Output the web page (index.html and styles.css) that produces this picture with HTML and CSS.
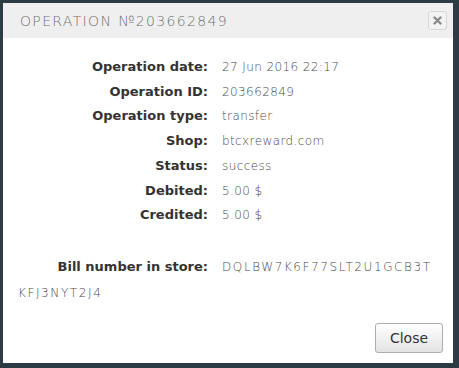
FILE: index.html
```html
<!DOCTYPE html>
<html>
<head>
<meta charset="utf-8">
<link rel="stylesheet" href="styles.css">
</head>
<body>
<div class="dialog">
  <div class="header">
    <div class="title">OPERATION №203662849</div>
    <button class="x-btn" aria-label="close">
      <svg width="9" height="9" viewBox="0 0 9 9"><path d="M1.5 1.5 L7.5 7.5 M7.5 1.5 L1.5 7.5" stroke="#8a8a8a" stroke-width="2.4" stroke-linecap="round"/></svg>
    </button>
  </div>
  <div class="body">
    <div class="row"><span class="label">Operation date:</span><span class="value">27 Jun 2016 22:17</span></div>
    <div class="row"><span class="label">Operation ID:</span><span class="value">203662849</span></div>
    <div class="row"><span class="label">Operation type:</span><span class="value">transfer</span></div>
    <div class="row"><span class="label">Shop:</span><span class="value">btcxreward.com</span></div>
    <div class="row"><span class="label">Status:</span><span class="value">success</span></div>
    <div class="row"><span class="label">Debited:</span><span class="value">5.00 $</span></div>
    <div class="row"><span class="label">Credited:</span><span class="value">5.00 $</span></div>
    <div class="row bill"><span class="label">Bill number in store:</span><span class="value">DQLBW7K6F77SLT2U1GCB3T<wbr>KFJ3NYT2J4</span></div>
  </div>
  <div class="footer">
    <button class="close-btn">Close</button>
  </div>
</div>
</body>
</html>
```
FILE: styles.css
```css
html, body {
  margin: 0;
  padding: 0;
  background: #2c3b44;
  width: 459px;
  height: 368px;
  overflow: hidden;
}
body {
  padding: 3px;
  box-sizing: border-box;
}
.dialog {
  width: 450px;
  height: 360px;
  background: #fff;
  display: flex;
  flex-direction: column;
}
.header {
  height: 35px;
  background: #efefef;
  display: flex;
  align-items: center;
  justify-content: space-between;
  padding: 0 6px 0 17px;
}
.title {
  font-family: "DejaVu Sans", sans-serif;
  font-weight: 200;
  font-size: 14px;
  letter-spacing: 1.35px;
  color: #707070;
}
.x-btn {
  width: 19px;
  height: 19px;
  border: 1px solid #d6d6d6;
  border-radius: 3px;
  background: #f3f3f3;
  padding: 0;
  display: flex;
  align-items: center;
  justify-content: center;
}
.body {
  flex: 1;
  padding: 17px 15px 0 15px;
}
.row {
  line-height: 24.7px;
  font-size: 12px;
}
.label {
  display: inline-block;
  width: 190px;
  text-align: right;
  font-family: "DejaVu Sans", sans-serif;
  font-weight: bold;
  font-size: 13px;
  color: #333;
  margin-right: 14px;
}
.value {
  font-family: "DejaVu Sans", sans-serif;
  font-weight: 200;
  font-size: 12px;
  letter-spacing: 0.4px;
  color: #4a4a4a;
}
.bill {
  margin-top: 26px;
  line-height: 26px;
}
.bill .value {
  letter-spacing: 1.6px;
}
.footer {
  display: flex;
  justify-content: flex-end;
  padding: 0 10px 10px 0;
}
.close-btn {
  width: 68px;
  height: 30px;
  border: 1px solid #adadad;
  border-radius: 3px;
  background: linear-gradient(#ffffff, #e3e3e3);
  font-family: "DejaVu Sans", sans-serif;
  font-size: 14px;
  color: #333;
  padding: 0;
}
```
